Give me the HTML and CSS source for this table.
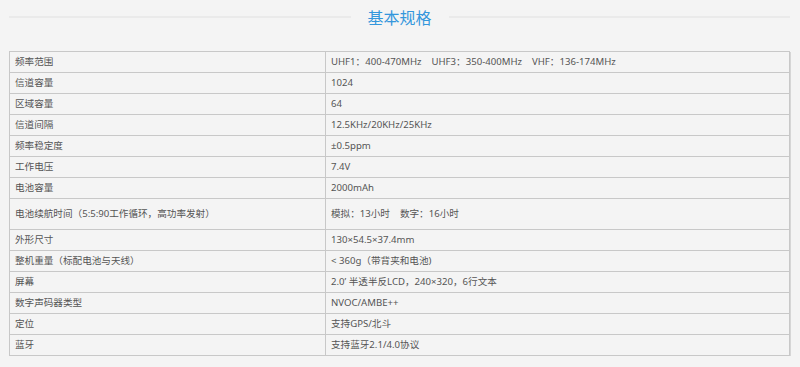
FILE: index.html
```html
<!DOCTYPE html>
<html lang="zh-CN">
<head>
<meta charset="utf-8">
<title>基本规格</title>
<link rel="stylesheet" href="styles.css">
</head>
<body>
<div class="page">
  <div class="heading">
    <span class="rule"></span>
    <h2 class="title">基本规格</h2>
    <span class="rule"></span>
  </div>
  <table class="specs">
    <tbody>
      <tr><td class="k">频率范围</td><td class="v">UHF1：400-470MHz&nbsp;&nbsp;&nbsp; UHF3：350-400MHz&nbsp;&nbsp;&nbsp; VHF：136-174MHz</td></tr>
      <tr><td class="k">信道容量</td><td class="v">1024</td></tr>
      <tr><td class="k">区域容量</td><td class="v">64</td></tr>
      <tr><td class="k">信道间隔</td><td class="v">12.5KHz/20KHz/25KHz</td></tr>
      <tr><td class="k">频率稳定度</td><td class="v">±0.5ppm</td></tr>
      <tr><td class="k">工作电压</td><td class="v">7.4V</td></tr>
      <tr><td class="k">电池容量</td><td class="v">2000mAh</td></tr>
      <tr class="tall"><td class="k">电池续航时间（5:5:90工作循环，高功率发射）</td><td class="v">模拟：13小时&nbsp;&nbsp;&nbsp; 数字：16小时</td></tr>
      <tr><td class="k">外形尺寸</td><td class="v">130×54.5×37.4mm</td></tr>
      <tr><td class="k">整机重量（标配电池与天线）</td><td class="v">&lt; 360g（带背夹和电池)</td></tr>
      <tr><td class="k">屏幕</td><td class="v">2.0’ 半透半反LCD，240×320，6行文本</td></tr>
      <tr><td class="k">数字声码器类型</td><td class="v">NVOC/AMBE++</td></tr>
      <tr><td class="k">定位</td><td class="v">支持GPS/北斗</td></tr>
      <tr><td class="k">蓝牙</td><td class="v">支持蓝牙2.1/4.0协议</td></tr>
    </tbody>
  </table>
</div>
</body>
</html>
```
FILE: styles.css
```css
html, body {
  margin: 0;
  padding: 0;
  background: #f4f4f4;
}
.page {
  width: 781px;
  margin-left: 9px;
  font-family: "Noto Sans", "Noto Sans CJK SC", sans-serif;
}
.heading {
  display: flex;
  align-items: center;
  height: 33px;
  margin-bottom: 18px;
}
.rule {
  flex: 1;
  height: 2px;
  background: #eaeaea;
}
.title {
  margin: 0;
  padding: 0 17px;
  font-family: "Noto Sans CJK SC", sans-serif;
  font-size: 16px;
  font-weight: 400;
  color: #3497dc;
  line-height: 20px;
}
.specs {
  width: 781px;
  border-collapse: collapse;
  border: 1px solid #b9b9b9;
  box-shadow: 1px 1px 0 #d6d6d6;
  color: #555;
  font-size: 9.6px;
}
.specs td {
  border: 1px solid #c8c8c8;
  height: 21px;
  padding: 0 5px;
  line-height: 12px;
  vertical-align: middle;
  box-sizing: border-box;
}
.specs td.k {
  width: 316px;
}
.specs tr.tall td {
  height: 31px;
}
```
